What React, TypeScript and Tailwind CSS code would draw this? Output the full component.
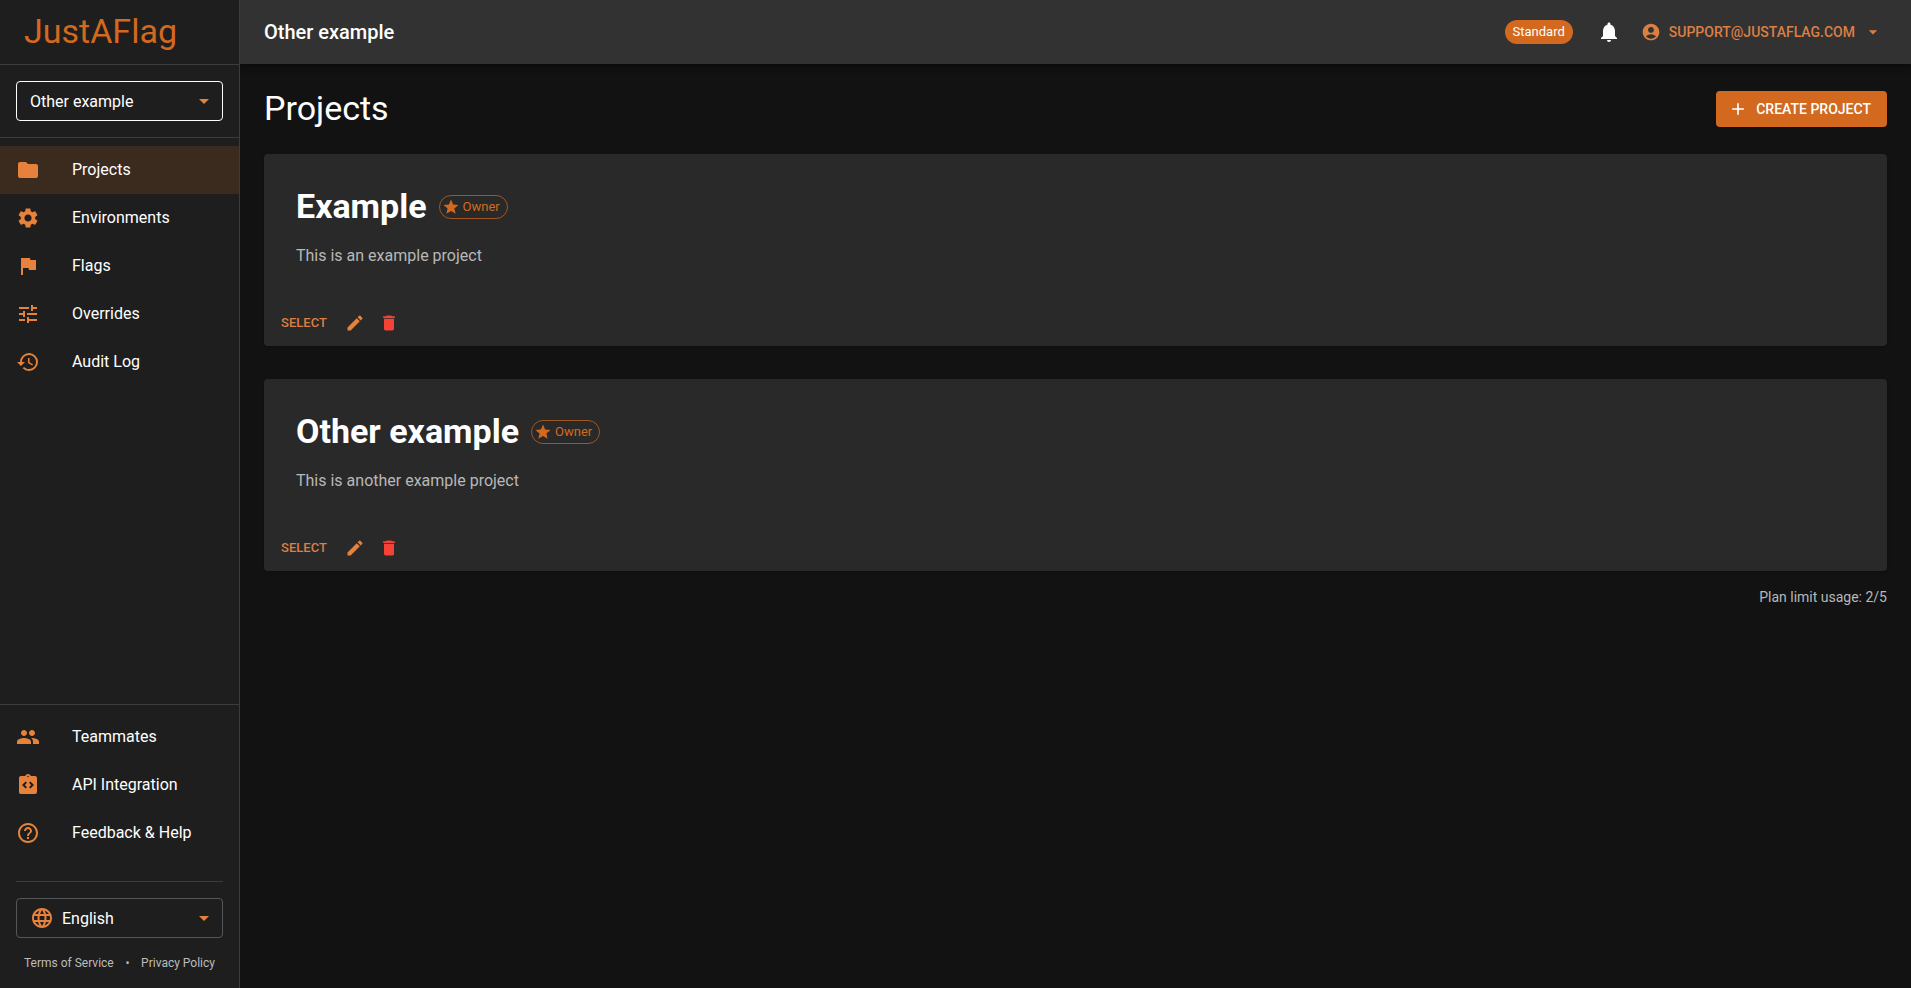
import type { ReactNode } from 'react';
import type { IconType } from 'react-icons';
import {
  MdAccountCircle,
  MdAdd,
  MdArrowDropDown,
  MdDelete,
  MdEdit,
  MdFlag,
  MdFolder,
  MdHelpOutline,
  MdHistory,
  MdIntegrationInstructions,
  MdLanguage,
  MdNotifications,
  MdPeople,
  MdSettings,
  MdStar,
  MdTune,
} from 'react-icons/md';

type NavEntry = { label: string; icon: IconType; active?: boolean };
type Project = { name: string; description: string };

const mainNav: NavEntry[] = [
  { label: 'Projects', icon: MdFolder, active: true },
  { label: 'Environments', icon: MdSettings },
  { label: 'Flags', icon: MdFlag },
  { label: 'Overrides', icon: MdTune },
  { label: 'Audit Log', icon: MdHistory },
];

const supportNav: NavEntry[] = [
  { label: 'Teammates', icon: MdPeople },
  { label: 'API Integration', icon: MdIntegrationInstructions },
  { label: 'Feedback & Help', icon: MdHelpOutline },
];

const projects: Project[] = [
  { name: 'Example', description: 'This is an example project' },
  { name: 'Other example', description: 'This is another example project' },
];

function NavList({ label, items }: { label: string; items: NavEntry[] }) {
  return (
    <nav aria-label={label} className="py-2">
      {items.map(({ label: text, icon: Icon, active }) => (
        <a
          key={text}
          href="#"
          aria-current={active ? 'page' : undefined}
          className={`flex h-12 items-center gap-8 px-4 text-base ${active ? 'bg-[#3b2a1e]' : ''}`}
        >
          <Icon className="size-6 text-[#e6823c]" />
          {text}
        </a>
      ))}
    </nav>
  );
}

function SelectBox({
  label,
  options,
  className,
  icon,
}: {
  label: string;
  options: string[];
  className: string;
  icon?: ReactNode;
}) {
  return (
    <div className="relative">
      {icon && <span className="pointer-events-none absolute inset-y-0 left-[14px] flex items-center">{icon}</span>}
      <select
        aria-label={label}
        className={`block h-10 w-full appearance-none rounded border bg-transparent pt-0.5 pr-8 text-base text-white ${
          icon ? 'pl-[45px]' : 'pl-[13px]'
        } ${className}`}
      >
        {options.map((option) => (
          <option key={option}>{option}</option>
        ))}
      </select>
      <span className="pointer-events-none absolute inset-y-0 right-[7px] flex items-center">
        <MdArrowDropDown className="size-6 text-[#e6823c]" />
      </span>
    </div>
  );
}

function Sidebar() {
  return (
    <aside className="z-20 flex w-60 shrink-0 flex-col border-r border-[#3c3c3c] bg-[#1e1e1e]">
      <div className="flex h-16 items-center px-6 pb-0.5 text-[34px] leading-10 text-[#d2691e]">JustAFlag</div>
      <div className="border-y border-[#3c3c3c] p-4">
        <SelectBox label="Project" options={['Other example', 'Example']} className="border-white" />
      </div>
      <NavList label="Main" items={mainNav} />
      <div className="mt-auto border-t border-[#3c3c3c]">
        <NavList label="Support" items={supportNav} />
      </div>
      <div className="mx-4 mt-4 border-t border-[#3c3c3c] pt-4">
        <SelectBox
          label="Language"
          options={['English']}
          className="border-[#565656]"
          icon={<MdLanguage className="size-6 text-[#e6823c]" />}
        />
      </div>
      <div className="flex items-center justify-between px-6 py-[17px] text-xs text-[#bcbcbc]">
        <a href="#">Terms of Service</a>
        <span>•</span>
        <a href="#">Privacy Policy</a>
      </div>
    </aside>
  );
}

function Header() {
  return (
    <header className="z-10 flex h-16 shrink-0 items-center bg-[#323232] px-6 shadow-[0_2px_4px_-1px_rgba(0,0,0,0.2),0_4px_5px_rgba(0,0,0,0.14),0_1px_10px_rgba(0,0,0,0.12)]">
      <div className="grow text-xl font-medium">Other example</div>
      <span className="flex h-6 items-center rounded-full bg-[#d2691e] px-2 text-[13px]">Standard</span>
      <button type="button" aria-label="Notifications" className="ml-4 flex size-10 items-center justify-center">
        <MdNotifications className="size-6" />
      </button>
      <button
        type="button"
        className="ml-2 flex h-9 items-center gap-2 px-1 text-sm font-medium text-[#db7f45] uppercase"
      >
        <MdAccountCircle className="size-5" />
        support@justaflag.com
        <MdArrowDropDown className="size-5" />
      </button>
    </header>
  );
}

function ProjectCard({ name, description }: Project) {
  return (
    <article className="rounded bg-[#292929] shadow-[0_1px_3px_rgba(0,0,0,0.3)]">
      <div className="px-8 pt-8">
        <div className="flex items-center gap-3">
          <h2 className="pb-0.5 text-[34px] leading-10 font-bold">{name}</h2>
          <span className="flex h-6 items-center gap-[3px] rounded-full border border-[#d2691e]/70 pr-[7px] pl-[2px] text-[13px] text-[#d2691e]">
            <MdStar className="size-[18px]" />
            Owner
          </span>
        </div>
        <p className="mt-4 text-base text-[#b8b8b8]">{description}</p>
      </div>
      <div className="mt-8 flex items-center gap-1 p-2">
        <button type="button" className="h-[30px] w-16 text-[13px] font-medium text-[#db7f45] uppercase">
          Select
        </button>
        <button
          type="button"
          aria-label={`Edit ${name}`}
          className="flex size-[30px] items-center justify-center text-[#e6823c]"
        >
          <MdEdit className="size-5" />
        </button>
        <button
          type="button"
          aria-label={`Delete ${name}`}
          className="flex size-[30px] items-center justify-center text-[#f44336]"
        >
          <MdDelete className="size-5" />
        </button>
      </div>
    </article>
  );
}

export default function App() {
  return (
    <div className="flex min-h-screen bg-[#121212] font-['Roboto',sans-serif] text-white">
      <Sidebar />
      <div className="flex min-w-0 grow flex-col">
        <Header />
        <main className="p-6">
          <div className="flex items-center justify-between">
            <h1 className="pb-0.5 text-[34px] leading-10">Projects</h1>
            <button
              type="button"
              className="flex h-9 items-center gap-2 rounded bg-[#d2691e] pr-4 pl-3 text-sm font-medium uppercase"
            >
              <MdAdd className="size-5" />
              Create project
            </button>
          </div>
          <div className="mt-6 flex flex-col gap-[33px]">
            {projects.map((project) => (
              <ProjectCard key={project.name} {...project} />
            ))}
          </div>
          <p className="mt-4 text-right text-sm text-[#b8b8b8]">Plan limit usage: 2/5</p>
        </main>
      </div>
    </div>
  );
}
